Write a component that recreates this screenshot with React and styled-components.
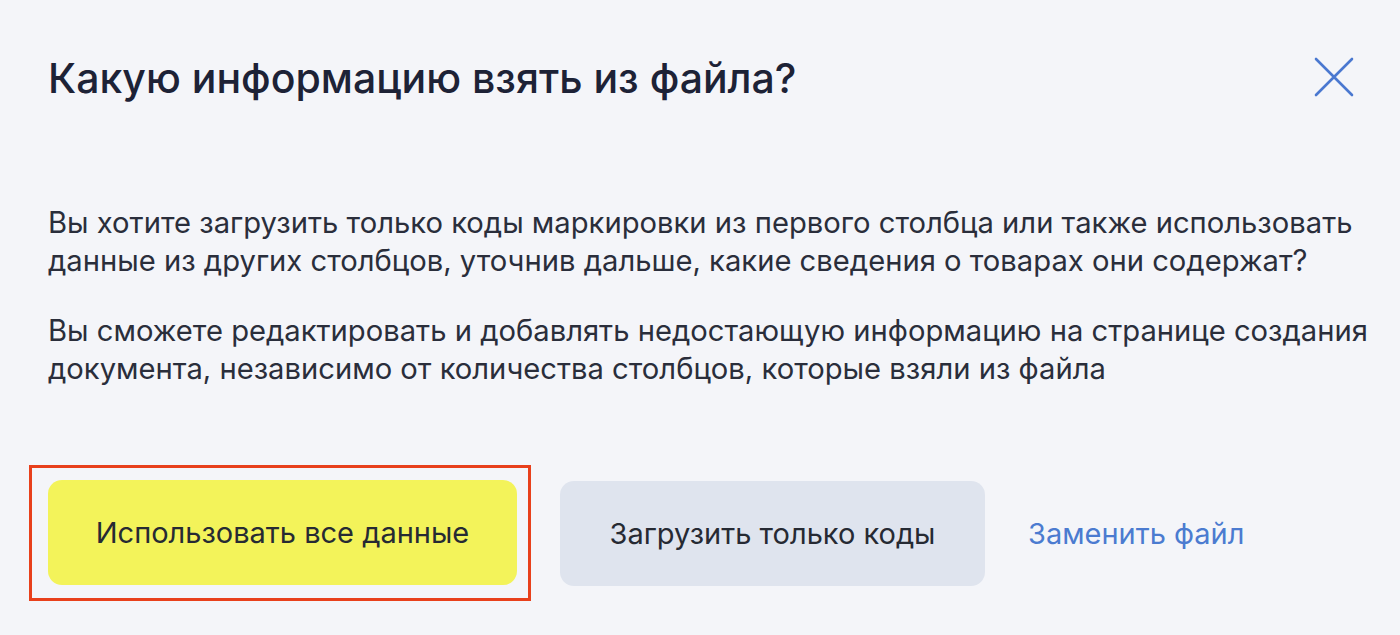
import React from "react";
import styled, { createGlobalStyle } from "styled-components";

const Global = createGlobalStyle`
  html, body { margin: 0; padding: 0; background: #f4f5f9; }
  body { font-family: Inter, "Noto Sans", sans-serif; -webkit-font-smoothing: antialiased; }
`;

const Dialog = styled.div`
  width: 1400px;
  height: 635px;
  box-sizing: border-box;
  background: #f4f5f9;
  padding: 52px 0 0 48px;
  display: flex;
  flex-direction: column;
`;

const Header = styled.div`
  display: flex;
  align-items: flex-start;
  justify-content: space-between;
  padding-right: 44px;
`;

const Title = styled.h1`
  margin: 0;
  font-size: 41px;
  line-height: 52px;
  font-weight: 500;
  color: #1d2236;
`;

const Close = styled.button`
  border: 0;
  background: none;
  padding: 0;
  width: 44px;
  height: 44px;
  margin-top: 3px;
  display: flex;
  align-items: center;
  justify-content: center;
  cursor: pointer;
`;

const Body = styled.div`
  margin-top: 100px;
  display: flex;
  flex-direction: column;
  gap: 32px;
`;

const Para = styled.p`
  margin: 0;
  font-size: 29.2px;
  line-height: 38px;
  color: #2a2e3b;
  max-width: 1345px;
`;

const Actions = styled.div`
  margin-top: 77px;
  margin-left: -19px;
  display: flex;
  align-items: center;
`;

const Highlight = styled.div`
  border: 3px solid #e8401c;
  padding: 12px 11px 13px 16px;
`;

const Button = styled.button`
  border: 0;
  border-radius: 14px;
  height: 105px;
  width: ${(p) => p.$w}px;
  background: ${(p) => (p.$primary ? "#f3f35a" : "#dfe4ee")};
  color: #262a33;
  font-family: inherit;
  font-size: 29px;
  font-weight: 400;
  cursor: pointer;
`;

const Link = styled.a`
  margin-left: 43px;
  font-size: 29px;
  color: #4b7bd0;
  text-decoration: none;
  cursor: pointer;
`;

const SecondaryWrap = styled.div`
  margin-left: 29px;
`;

export default function App() {
  return (
    <>
      <Global />
      <Dialog>
        <Header>
          <Title>Какую информацию взять из файла?</Title>
          <Close aria-label="Закрыть">
            <svg width="40" height="40" viewBox="0 0 40 40">
              <path d="M2 2 L38 38 M38 2 L2 38" stroke="#4a78d0" strokeWidth="2.6" strokeLinecap="round" />
            </svg>
          </Close>
        </Header>
        <Body>
          <Para>
            Вы хотите загрузить только коды маркировки из первого столбца или также использовать
            данные из других столбцов, уточнив дальше, какие сведения о товарах они содержат?
          </Para>
          <Para>
            Вы сможете редактировать и добавлять недостающую информацию на странице создания
            документа, независимо от количества столбцов, которые взяли из файла
          </Para>
        </Body>
        <Actions>
          <Highlight>
            <Button $primary $w={469}>Использовать все данные</Button>
          </Highlight>
          <SecondaryWrap>
            <Button $w={425}>Загрузить только коды</Button>
          </SecondaryWrap>
          <Link>Заменить файл</Link>
        </Actions>
      </Dialog>
    </>
  );
}
